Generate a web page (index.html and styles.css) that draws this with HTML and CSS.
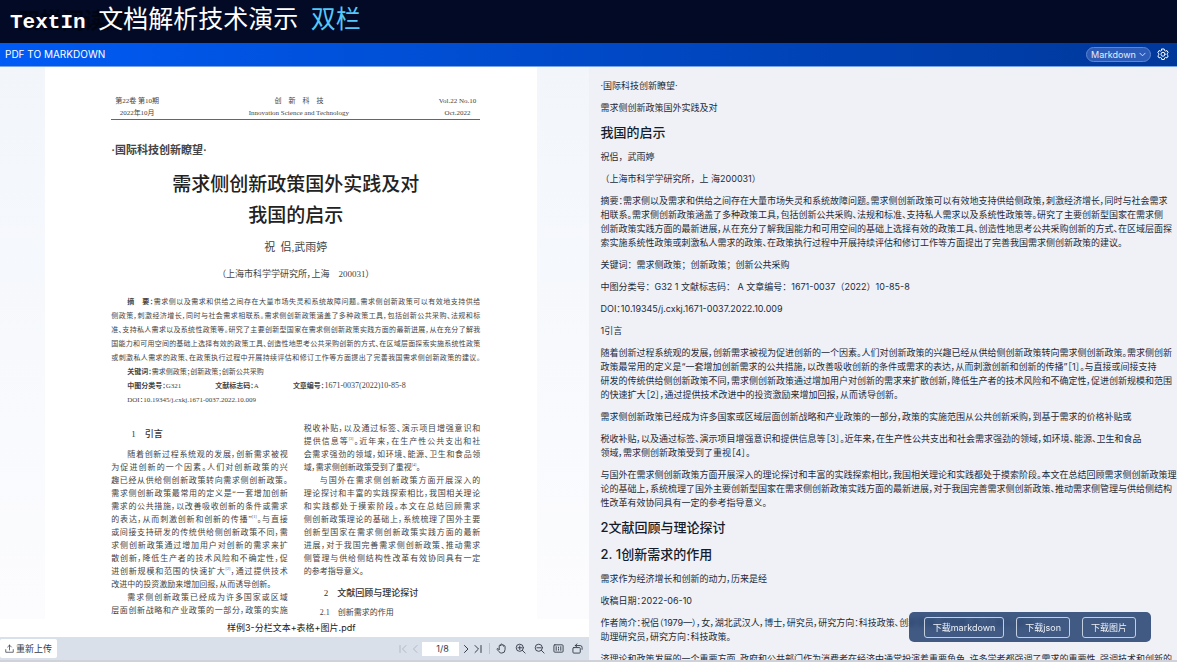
FILE: index.html
```html
<!DOCTYPE html>
<html lang="zh-CN">
<head>
  <meta charset="UTF-8" />
  <title>TextIn 文档解析技术演示</title>
  <link rel="stylesheet" href="styles.css">
</head>
<body>
  <header class="banner">
    <span class="banner-shadow" aria-hidden="true">双栏阅读顺</span>
    <h1><span class="latin">TextIn </span>文档解析技术演示<span class="latin"> </span><span class="accent">双栏</span></h1>
  </header>

  <div class="topbar">
    <span class="topbar-title">PDF TO MARKDOWN</span>
    <div class="topbar-tools">
      <div class="format">
        <select class="format-select" aria-label="输出格式">
          <option>Markdown</option>
          <option>JSON</option>
        </select>
        <svg class="format-arrow" viewBox="0 0 8 8"><path d="M1 2.5l3 3 3-3"/></svg>
      </div>
      <button class="icon-btn settings" aria-label="设置">
        <svg viewBox="0 0 24 24"><path d="M9.6 2h4.8l.8 3.1 1.7 1 3.1-.9 2.4 4.1-2.3 2.2v2l2.3 2.2-2.4 4.1-3.1-.9-1.7 1-.8 3.1H9.6l-.8-3.1-1.7-1-3.1.9-2.4-4.1 2.3-2.2v-2L1.6 9.3 4 5.2l3.1.9 1.7-1z"/><circle cx="12" cy="12.5" r="4"/></svg>
      </button>
    </div>
  </div>

  <main class="content">
    <section class="viewer">
      <div class="page-area">
        <article class="page">
          <div class="page-head">
            <div>第22卷 第10期<br>2022年10月</div>
            <div>创　新　科　技<br>Innovation Science and Technology</div>
            <div>Vol.22 No.10<br>Oct.2022</div>
          </div>
          <p class="column-name">·国际科技创新瞭望·</p>
          <h2>需求侧创新政策国外实践及对<br>我国的启示</h2>
          <p class="author">祝&nbsp; 侣,武雨婷</p>
          <p class="affiliation">（上海市科学学研究所，上海　200031）</p>

          <div class="abstract">
            <p class="lines"><b>摘　要：</b>需求侧以及需求和供给之间存在大量市场失灵和系统故障问题。需求侧创新政策可以有效地支持供给<br>侧政策，刺激经济增长，同时与社会需求相联系。需求侧创新政策涵盖了多种政策工具，包括创新公共采购、法规和标<br>准、支持私人需求以及系统性政策等。研究了主要创新型国家在需求侧创新政策实践方面的最新进展，从在充分了解我<br>国能力和可用空间的基础上选择有效的政策工具、创造性地思考公共采购创新的方式、在区域层面探索实施系统性政策<br>或刺激私人需求的政策、在政策执行过程中开展持续评估和修订工作等方面提出了完善我国需求侧创新政策的建议。</p>
            <p class="meta"><b>关键词：</b>需求侧政策；创新政策；创新公共采购</p>
            <p class="meta meta-row"><span><b>中图分类号：</b>G321</span><span><b>文献标志码：</b>A</span><span><b>文章编号：</b><span class="num">1671-0037(2022)10-85-8</span></span></p>
            <p class="meta">DOI：10.19345/j.cxkj.1671-0037.2022.10.009</p>
          </div>

          <div class="columns">
            <div class="col">
              <h3 class="first">1　引言</h3>
              <p class="lines">随着创新过程系统观的发展，创新需求被视<br>为促进创新的一个因素。人们对创新政策的兴<br>趣已经从供给侧创新政策转向需求侧创新政策。<br>需求侧创新政策最常用的定义是“一套增加创新<br>需求的公共措施，以改善吸收创新的条件或需求<br>的表达，从而刺激创新和创新的传播”<sup>[1]</sup>。与直接<br>或间接支持研发的传统供给侧创新政策不同，需<br>求侧创新政策通过增加用户对创新的需求来扩<br>散创新，降低生产者的技术风险和不确定性，促<br>进创新规模和范围的快速扩大<sup>[2]</sup>，通过提供技术<span class="end">改进中的投资激励来增加回报，从而诱导创新。</span></p>
              <p class="lines">需求侧创新政策已经成为许多国家或区域<br>层面创新战略和产业政策的一部分，政策的实施</p>
            </div>
            <div class="col">
              <p class="lines flush">税收补贴，以及通过标签、演示项目增强意识和<br>提供信息等<sup>[3]</sup>。近年来，在生产性公共支出和社<br>会需求强劲的领域，如环境、能源、卫生和食品领<span class="end">域，需求侧创新政策受到了重视<sup>[4]</sup>。</span></p>
              <p class="lines">与国外在需求侧创新政策方面开展深入的<br>理论探讨和丰富的实践探索相比，我国相关理论<br>和实践都处于摸索阶段。本文在总结回顾需求<br>侧创新政策理论的基础上，系统梳理了国外主要<br>创新型国家在需求侧创新政策实践方面的最新<br>进展，对于我国完善需求侧创新政策、推动需求<br>侧管理与供给侧结构性改革有效协同具有一定<span class="end">的参考指导意义。</span></p>
              <h3 class="second">2　文献回顾与理论探讨</h3>
              <h4>2.1　创新需求的作用</h4>
            </div>
          </div>
        </article>
      </div>

      <div class="file-name">样例3-分栏文本+表格+图片.pdf</div>

      <div class="toolbar">
        <button class="upload">
          <svg viewBox="0 0 12 12"><path d="M6 8V1.5M3.5 4L6 1.5 8.5 4M1 7.5V11h10V7.5"/></svg>
          重新上传
        </button>
        <div class="pager">
          <button class="icon-btn" disabled aria-label="第一页"><svg viewBox="0 0 12 12"><path d="M3 2.500v7M9 2.500L5.500 6 9 9.500"/></svg></button>
          <button class="icon-btn" disabled aria-label="上一页"><svg viewBox="0 0 12 12"><path d="M8 2.500L4.500 6 8 9.500"/></svg></button>
          <input class="page-input" type="text" value="1/8" aria-label="页码">
          <button class="icon-btn" aria-label="下一页"><svg viewBox="0 0 12 12"><path d="M4.500 2.500L8 6 4.500 9.500"/></svg></button>
          <button class="icon-btn" aria-label="最后一页"><svg viewBox="0 0 12 12"><path d="M3 2.500L6.500 6 3 9.500M9 2.500v7"/></svg></button>
        </div>
        <div class="view-tools">
          <button class="icon-btn" aria-label="拖动"><svg viewBox="0 0 12 12"><path d="M3.5 7V3.2q0-.9.8-.9t.8.9V2q0-.9.8-.9t.8.9v.6q0-.8.8-.8t.8.8v1q0-.7.8-.7t.8.8V7q0 4-3.600 4-2 0-3-1.500L1.200 7q-.3-.8.4-1 .7-.2 1.900 1.300"/></svg></button>
          <button class="icon-btn" aria-label="放大"><svg viewBox="0 0 12 12"><circle cx="5.2" cy="5.2" r="3.9"/><path d="M8 8l3 3M3.2 5.2h4M5.2 3.2v4"/></svg></button>
          <button class="icon-btn" aria-label="缩小"><svg viewBox="0 0 12 12"><circle cx="5.2" cy="5.2" r="3.9"/><path d="M8 8l3 3M3.2 5.2h4"/></svg></button>
          <button class="icon-btn" aria-label="原始大小"><svg viewBox="0 0 12 12"><rect x="1" y="2" width="10" height="8" rx="1"/><path d="M3.5 4v4M8.5 4v4M6 4.5v1M6 6.800v1"/></svg></button>
          <button class="icon-btn" aria-label="旋转"><svg viewBox="0 0 12 12"><rect x="1" y="5" width="8" height="6" rx="1"/><path d="M3.5 2.8h5.5q2 0 2 2.200v2M5.5 1L3.5 2.8l2 1.700"/></svg></button>
        </div>
      </div>
    </section>

    <section class="result">
      <div class="markdown">
        <p>·国际科技创新瞭望·</p>
        <p>需求侧创新政策国外实践及对</p>
        <h2>我国的启示</h2>
        <p class="full">祝侣，武雨婷</p>
        <p class="full">（上海市科学学研究所，上 海200031）</p>
        <p>摘要：需求侧以及需求和供给之间存在大量市场失灵和系统故障问题。需求侧创新政策可以有效地支持供给侧政策，刺激经济增长，同时与社会需求<br>相联系。需求侧创新政策涵盖了多种政策工具，包括创新公共采购、法规和标准、支持私人需求以及系统性政策等。研究了主要创新型国家在需求侧<br>创新政策实践方面的最新进展，从在充分了解我国能力和可用空间的基础上选择有效的政策工具、创造性地思考公共采购创新的方式、在区域层面探<br>索实施系统性政策或刺激私人需求的政策、在政策执行过程中开展持续评估和修订工作等方面提出了完善我国需求侧创新政策的建议。</p>
        <p class="full">关键词：需求侧政策；创新政策；创新公共采购</p>
        <p class="full">中图分类号：G32 1 文献标志码： A 文章编号：1671-0037（2022）10-85-8</p>
        <p>DOI：10.19345/j.cxkj.1671-0037.2022.10.009</p>
        <p>1引言</p>
        <p>随着创新过程系统观的发展，创新需求被视为促进创新的一个因素。人们对创新政策的兴趣已经从供给侧创新政策转向需求侧创新政策。需求侧创新<br>政策最常用的定义是“一套增加创新需求的公共措施，以改善吸收创新的条件或需求的表达，从而刺激创新和创新的传播”［1］。与直接或间接支持<br>研发的传统供给侧创新政策不同，需求侧创新政策通过增加用户对创新的需求来扩散创新，降低生产者的技术风险和不确定性，促进创新规模和范围<br>的快速扩大［2］，通过提供技术改进中的投资激励来增加回报，从而诱导创新。</p>
        <p>需求侧创新政策已经成为许多国家或区域层面创新战略和产业政策的一部分，政策的实施范围从公共创新采购，到基于需求的价格补贴或</p>
        <p>税收补贴，以及通过标签、演示项目增强意识和提供信息等［3］。近年来，在生产性公共支出和社会需求强劲的领域，如环境、能源、卫生和食品<br>领域，需求侧创新政策受到了重视［4］。</p>
        <p>与国外在需求侧创新政策方面开展深入的理论探讨和丰富的实践探索相比，我国相关理论和实践都处于摸索阶段。本文在总结回顾需求侧创新政策理<br>论的基础上，系统梳理了国外主要创新型国家在需求侧创新政策实践方面的最新进展，对于我国完善需求侧创新政策、推动需求侧管理与供给侧结构<br>性改革有效协同具有一定的参考指导意义。</p>
        <h2>2文献回顾与理论探讨</h2>
        <h2>2. 1创新需求的作用</h2>
        <p>需求作为经济增长和创新的动力，历来是经</p>
        <p>收稿日期：2022-06-10</p>
        <p>作者简介：祝侣（1979—），女，湖北武汉人，博士，研究员，研究方向：科技政策、创新管理；武雨婷，女，上海人，硕士，<br>助理研究员，研究方向：科技政策。</p>
        <p>济理论和政策发展的一个重要方面，政府和公共部门作为消费者在经济中通常扮演着重要角色，许多学者都强调了需求的重要性，强调技术和创新的</p>
      </div>
      <div class="downloads">
        <button>下载markdown</button>
        <button>下载json</button>
        <button>下载图片</button>
      </div>
    </section>
  </main>
</body>
</html>
```

FILE: styles.css
```css
* {
  box-sizing: border-box;
}

body {
  margin: 0;
  height: 100vh;
  display: flex;
  flex-direction: column;
  overflow: hidden;
  background: #cfd2d8;
  font-family: Inter, "Noto Sans CJK SC", sans-serif;
  font-size: 9px;
  color: #222b3a;
}

h1, h2, h3, h4, p {
  margin: 0;
}

button, input, select {
  font: inherit;
  color: inherit;
  border: none;
  margin: 0;
}

button {
  cursor: pointer;
}

svg {
  display: block;
  fill: none;
  stroke: currentColor;
  stroke-linecap: round;
  stroke-linejoin: round;
}

/* banner */
.banner {
  position: relative;
  flex: none;
  height: 43px;
  padding: 0 10px;
  display: flex;
  align-items: center;
  background: #020a26;
}

.banner h1 {
  position: relative;
  font-family: "Liberation Serif", "Noto Sans CJK SC", serif;
  font-size: 25px;
  line-height: 38px;
  font-weight: normal;
  color: #fff;
  white-space: pre;
}

.banner .latin {
  font-family: "Liberation Mono", monospace;
  font-size: 21px;
  font-weight: bold;
}

.banner .accent {
  color: #55c8fb;
}

.banner-shadow {
  position: absolute;
  left: 18px;
  top: 5px;
  font-size: 22px;
  line-height: 30px;
  font-weight: bold;
  color: #010512;
}

/* blue bar */
.topbar {
  flex: none;
  height: 24px;
  padding: 0 8px 1px 5px;
  display: flex;
  align-items: center;
  justify-content: space-between;
  background: linear-gradient(90deg, #005bf5, #00389a);
  border-bottom: 1px solid #7ba4e6;
  color: #fff;
}

.topbar-title {
  font-size: 10px;
}

.topbar-tools {
  display: flex;
  align-items: center;
  gap: 6px;
}

.format {
  position: relative;
}

.format-select {
  display: block;
  appearance: none;
  width: 65px;
  height: 15px;
  padding: 0 4px;
  border: 1px solid #5c86d2;
  border-radius: 8px;
  background: #2c5cb8;
  color: #e4ecfb;
}

.format-arrow {
  position: absolute;
  right: 5px;
  top: 4px;
  width: 7px;
  height: 7px;
  color: #e4ecfb;
  pointer-events: none;
}

.icon-btn {
  padding: 0;
  background: none;
}

.icon-btn svg {
  width: 12px;
  height: 12px;
}

.settings svg {
  stroke-width: 2;
}

/* panels */
.content {
  flex: 1;
  min-height: 0;
  display: grid;
  grid-template-columns: 1fr 1fr;
  padding-bottom: 2px;
}

.viewer {
  min-width: 0;
  min-height: 0;
  display: flex;
  flex-direction: column;
  background: #fff;
}

.page-area {
  flex: 1;
  min-height: 0;
  overflow: hidden;
  padding-right: 6px;
  background: linear-gradient(#f2f6fb, #fcfcfe);
}

.page {
  max-width: 492px;
  margin: 0 auto;
  padding: 28px 57px 0 66px;
  background: #fff;
  color: #444;
  font-family: "Liberation Serif", "Noto Sans CJK SC", serif;
  font-feature-settings: "palt";
}

.page-head {
  display: flex;
  justify-content: space-between;
  padding: 0 4px;
  border-bottom: 1px solid #666;
  font-size: 7px;
  line-height: 12px;
  text-align: center;
  color: #444;
}

.column-name {
  margin-top: 22px;
  font-size: 11px;
  line-height: 16px;
  font-weight: bold;
  color: #444;
}

.page h2 {
  margin-top: 11px;
  font-size: 19px;
  line-height: 31px;
  font-weight: 500;
  text-align: center;
  color: #222;
}

.author {
  margin-top: 8px;
  font-size: 11px;
  line-height: 16px;
  text-align: center;
}

.affiliation {
  margin-top: 11px;
  font-size: 9px;
  line-height: 16px;
  text-align: center;
}

.abstract {
  margin-top: 13px;
  font-size: 7px;
  line-height: 14px;
}

.lines {
  text-indent: 16px;
  text-align: justify;
  text-align-last: justify;
}

.lines.flush {
  text-indent: 0;
}

.lines .end {
  display: block;
  text-indent: 0;
  text-align-last: left;
}

.meta {
  padding-left: 16px;
}

.meta-row {
  display: flex;
  gap: 34px;
}

.meta .num {
  font-size: 8px;
}

.columns {
  display: grid;
  grid-template-columns: 1fr 1fr;
  gap: 16px;
  margin-top: 15px;
  font-size: 8px;
  line-height: 13px;
}

.page h3 {
  padding-left: 20px;
  font-size: 9px;
  font-weight: 500;
  color: #333;
}

.page h3.first {
  margin: 6px 0 7px;
}

.page h3.second {
  margin: 9px 0 6px;
}

.page h4 {
  padding-left: 16px;
  font-size: 8px;
  font-weight: normal;
}

sup {
  font-size: 4px;
  line-height: 0;
}

.file-name {
  flex: none;
  height: 18px;
  padding-right: 6px;
  line-height: 18px;
  text-align: center;
  color: #222;
}

/* bottom toolbar */
.toolbar {
  flex: none;
  height: 23px;
  padding-right: 6px;
  display: flex;
  align-items: center;
  background: #dae0e9;
  color: #333c4a;
}

.upload {
  height: 19px;
  margin-right: auto;
  padding: 0 5px;
  display: flex;
  align-items: center;
  gap: 2px;
  border-radius: 2px;
  background: #fff;
}

.upload svg {
  width: 9px;
  height: 9px;
}

.pager {
  display: flex;
  align-items: center;
}

.pager .icon-btn:disabled {
  color: #b3bac6;
}

.page-input {
  width: 37px;
  height: 14px;
  margin: 0 1px;
  padding: 0 0 0 5px;
  background: #fff;
  text-align: center;
}

.view-tools {
  display: flex;
  align-items: center;
  gap: 8px;
  margin-left: 5px;
  padding-left: 6px;
  border-left: 1px solid #b9c1ce;
}

.view-tools .icon-btn svg {
  width: 11px;
  height: 11px;
}

/* parsed text */
.result {
  position: relative;
  min-width: 0;
  min-height: 0;
  overflow: hidden;
  background: #f0f1f6;
}

.markdown {
  display: flex;
  flex-direction: column;
  gap: 8px;
  padding: 12px 0 0 12px;
  line-height: 14px;
  white-space: nowrap;
  font-feature-settings: "palt";
}

.markdown .full {
  font-feature-settings: normal;
}

.markdown h2 {
  font-size: 13px;
  line-height: 19px;
  font-weight: 500;
  color: #141c2b;
}

.downloads {
  position: absolute;
  right: 26px;
  bottom: 18px;
  height: 30px;
  padding: 0 15px;
  display: flex;
  align-items: center;
  gap: 12px;
  border-radius: 5px;
  background: rgba(39, 68, 115, 0.88);
  backdrop-filter: blur(2px);
}

.downloads button {
  height: 21px;
  padding: 0 8px;
  border: 1px solid #c3cedf;
  border-radius: 3px;
  background: none;
  color: #eef2f8;
}
```
